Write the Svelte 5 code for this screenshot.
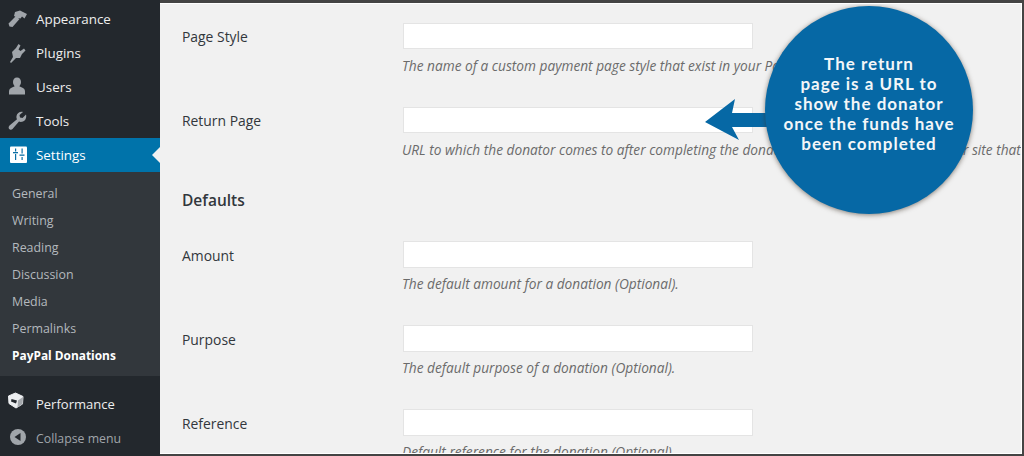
<script>
  const top = [
    { label: 'Appearance', d: 'M8 3 13 1.500 20 5 17.500 9.500 15 7.500 13.500 9.500 11 9 7 7ZM8.500 7.500 12.500 10 5.500 18 2.500 17.500 1.500 14.500Z' },
    { label: 'Plugins', d: 'M5 9 9 5 11.500 1 13.500 2.500 11.500 6.500 13.500 8 17 5.500 18.500 7.500 15 11 13 15 9 15 4 20 3 19 6 14Z' },
    { label: 'Users', d: 'M10 .5C12.500.5 14 2.500 14 5 14 7 13 8.500 12.300 9.300L15 10.500C17 11.400 18 12.500 18 14.500V17.500H2V14.500C2 12.500 3 11.400 5 10.500L7.700 9.300C7 8.500 6 7 6 5 6 2.500 7.500.5 10 .5Z' },
    { label: 'Tools', d: 'M19 3.500 15.500 7 13 6.500 12.500 4 16 1C13 .3 10 2 9.500 5 9.300 6.500 9.500 7.500 10 8.200L2.500 14.500C1 16 1.500 18 3 18.500 4 19 5 18.500 5.500 18L12 10.500C13 11 14.500 11 16 10.500 18.500 9.500 19.800 6.500 19 3.500Z' }
  ];
  const sub = ['General', 'Writing', 'Reading', 'Discussion', 'Media', 'Permalinks', 'PayPal Donations'];
  const rowsA = [
    { label: 'Page Style', help: 'The name of a custom payment page style that exist in your PayPal account profile.' },
    { label: 'Return Page', help: 'URL to which the donator comes to after completing the donation; for example, a URL on your site that displays a thank you.' }
  ];
  const rowsB = [
    { label: 'Amount', help: 'The default amount for a donation (Optional).' },
    { label: 'Purpose', help: 'The default purpose of a donation (Optional).' },
    { label: 'Reference', help: 'Default reference for the donation (Optional).' }
  ];
</script>

<div class="page">
  <aside class="side">
    <ul class="menu">
      {#each top as item}
        <li class="item">
          <svg class="icon" viewBox="0 0 20 20"><path d={item.d} /></svg>
          <span>{item.label}</span>
        </li>
      {/each}
      <li class="item current">
        <svg class="icon" viewBox="0 0 20 20">
          <rect x="3" y="1.500" width="17" height="16.500" rx="1" fill="#fff" />
          <g fill="#0b6fa5">
            <rect x="8" y="3.500" width="1.200" height="3" />
            <rect x="6" y="7" width="5" height="1.300" />
            <rect x="8" y="9" width="1.200" height="6" />
            <rect x="14.500" y="3.500" width="1.200" height="5" />
            <rect x="12.500" y="9.500" width="5" height="1.300" />
            <rect x="14.500" y="12" width="1.200" height="3" />
          </g>
        </svg>
        <span>Settings</span>
        <i class="notch"></i>
      </li>
    </ul>
    <ul class="submenu">
      {#each sub as name, i}
        <li class:active={i === sub.length - 1}>{name}</li>
      {/each}
    </ul>
    <div class="item perf">
      <svg class="icon cube" viewBox="0 0 20 20">
        <path d="M8.500 1 16 4.500 15.500 12 9 16 2 11.500 1.500 4Z" fill="#eceef0" stroke="#eceef0" stroke-linejoin="round" />
        <path d="M11 8.500 16 5 15.500 12 10.500 15.500Z" fill="#a4a8ac" />
        <path d="M4.500 7 10 8.500 9 11.500 4 9.500Z" fill="#23282d" />
      </svg>
      <span>Performance</span>
    </div>
    <div class="item collapse">
      <svg class="icon knob" viewBox="0 0 20 20">
        <circle cx="10" cy="10" r="8" />
        <path d="M12.500 6v8L6.500 10Z" fill="#23282d" />
      </svg>
      <span>Collapse menu</span>
    </div>
  </aside>

  <main class="content">
    <section class="group">
      {#each rowsA as row}
        <div class="row">
          <div class="label">{row.label}</div>
          <div class="field">
            <div class="input"></div>
            <p class="help">{row.help}</p>
          </div>
        </div>
      {/each}
    </section>
    <h3>Defaults</h3>
    <section class="group lower">
      {#each rowsB as row}
        <div class="row">
          <div class="label">{row.label}</div>
          <div class="field">
            <div class="input"></div>
            <p class="help">{row.help}</p>
          </div>
        </div>
      {/each}
    </section>
  </main>

  <svg class="arrow" viewBox="0 0 80 44"><path d="M1 24 31 1 28 15H80V29H28L35 42Z" /></svg>
  <div class="bubble">
    <p>The return<br />page is a URL to<br />show the donator<br />once the funds have<br />been completed</p>
  </div>
  <div class="frame"></div>
</div>

<style>
  :global(body) {
    margin: 0;
    background: #f1f1f1;
    font-family: "Open Sans", "Noto Sans", sans-serif;
  }
  .page {
    position: relative;
    display: flex;
    width: 1024px;
    height: 456px;
    overflow: hidden;
    background: #f1f1f1;
  }
  ul {
    list-style: none;
    margin: 0;
    padding: 0;
  }
  .side {
    flex: 0 0 160px;
    background: #23282d;
    color: #eee;
    font-size: 13.400px;
    display: flex;
    flex-direction: column;
  }
  .menu {
    padding-top: 2px;
  }
  .item {
    display: flex;
    align-items: center;
    position: relative;
    height: 34px;
    box-sizing: border-box;
    padding-left: 7px;
    gap: 9px;
  }
  .item span {
    margin-top: -1px;
  }
  .icon {
    width: 20px;
    height: 20px;
    fill: #a0a5aa;
    flex: none;
  }
  .current {
    background: #0073aa;
    color: #fff;
  }
  .notch {
    position: absolute;
    right: 0;
    top: 9px;
    border: 8px solid transparent;
    border-right-color: #f1f1f1;
    border-left-width: 0;
  }
  .submenu {
    background: #32373c;
    height: 204px;
    box-sizing: border-box;
    padding-top: 8px;
    color: #b4b9be;
    font-size: 12.400px;
    margin-bottom: 11px;
  }
  .submenu li {
    height: 27px;
    line-height: 27px;
    padding-left: 12px;
  }
  .submenu .active {
    color: #fff;
    font-weight: 700;
    font-size: 11.900px;
  }
  .perf {
    font-size: 13px;
  }
  .cube {
    margin-top: -4px;
  }
  .collapse {
    color: #a0a5aa;
    font-size: 12.300px;
  }
  .collapse span {
    margin-top: 0;
  }
  .knob {
    margin: -2px -1px 0 1px;
  }
  .content {
    flex: 1;
    padding: 23px 0 0 22px;
    min-width: 0;
    color: #32373c;
    white-space: nowrap;
  }
  .row {
    display: flex;
    height: 84px;
  }
  .label {
    flex: 0 0 221px;
    font-size: 13.900px;
    line-height: 28px;
  }
  .input {
    width: 350px;
    height: 26px;
    box-sizing: border-box;
    background: #fff;
    border: 1px solid #e4e4e4;
  }
  .help {
    margin: 7px 0 0 -1px;
    font-size: 13.700px;
    line-height: 20px;
    font-style: italic;
    color: #6b6b6b;
  }
  h3 {
    margin: -4px 0 0;
    height: 54px;
    font-size: 15.500px;
    font-weight: 600;
    line-height: 26px;
    color: #32373c;
    box-sizing: border-box;
  }
  .lower .input {
    height: 27px;
  }
  .lower .help {
    margin-top: 6px;
  }
  .lower .label {
    line-height: 30px;
  }
  .arrow {
    position: absolute;
    left: 704px;
    top: 98px;
    width: 80px;
    height: 44px;
    fill: #0668a5;
  }
  .bubble {
    position: absolute;
    left: 765px;
    top: 6px;
    width: 208px;
    height: 208px;
    border-radius: 50%;
    background: #0668a5;
    box-shadow: 0 1px 5px rgba(60, 50, 40, 0.6);
    color: #f3f6f8;
    display: flex;
    align-items: center;
    justify-content: center;
    text-align: center;
  }
  .bubble p {
    margin: 0 0 13px;
    font-family: Lato, "Open Sans", sans-serif;
    font-size: 17px;
    font-weight: 700;
    line-height: 20px;
    letter-spacing: 1px;
    white-space: nowrap;
  }
  .frame {
    position: absolute;
    inset: 0 0 0 160px;
    border: solid #444;
    border-width: 3px 2px 2px 0;
    pointer-events: none;
    box-shadow: inset 0 1px 0 #fff, inset -1px -1px 0 #fff;
  }
</style>
